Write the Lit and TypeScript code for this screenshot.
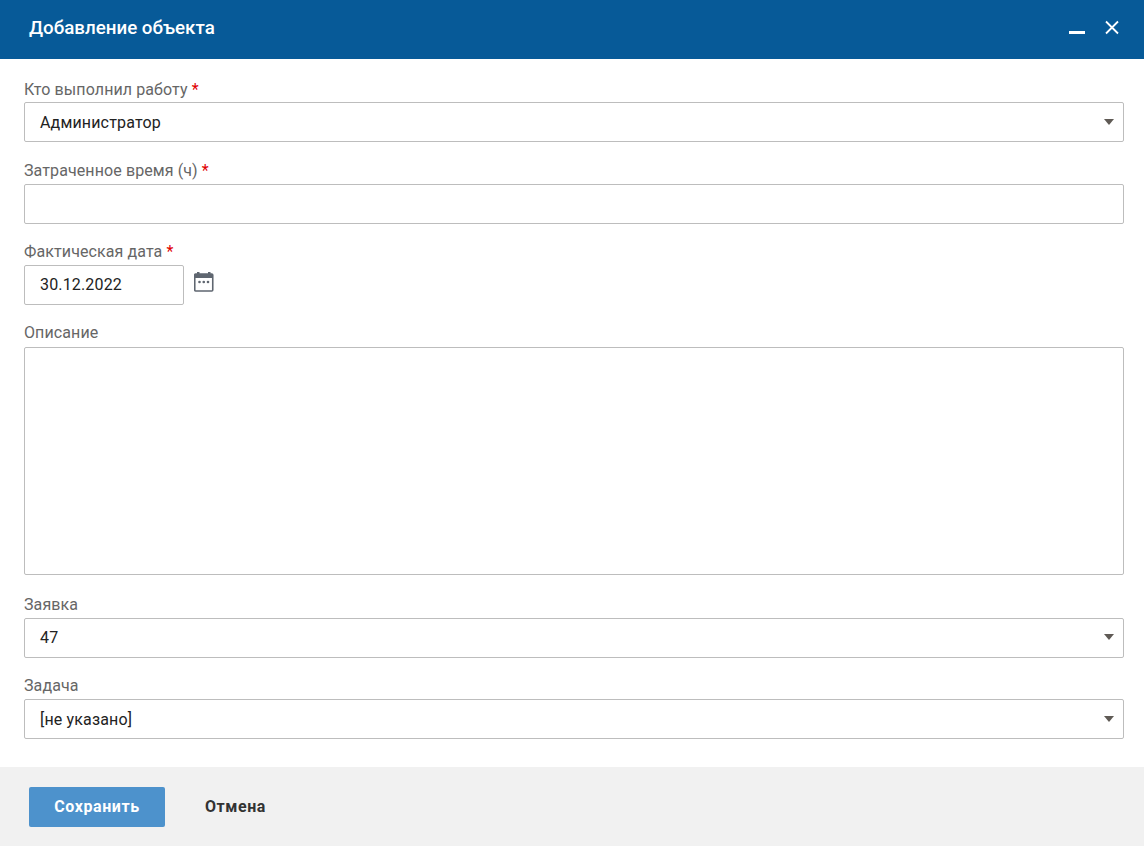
import { LitElement, html, css } from "lit";
import { customElement } from "lit/decorators.js";

@customElement("app-root")
export class AppRoot extends LitElement {
  static styles = css`
    :host { display: flex; flex-direction: column; width: 1144px; height: 846px; background: #fff; font-family: Roboto, sans-serif; font-size: 16px; color: #333; overflow: hidden; }
    .head { height: 59px; background: #075a98; display: flex; align-items: center; padding: 0 24px 3px 29px; flex: none; box-sizing: border-box; }
    .title { flex: 1; color: #fff; font-size: 18.75px; font-weight: 500; }
    .icons { display: flex; gap: 19px; align-items: center; }
    .body { flex: 1; padding: 21px 20px 0 24px; display: flex; flex-direction: column; }
    .field { display: flex; flex-direction: column; margin-bottom: 18px; }
    .field.first { margin-bottom: 19px; }
    .field.first label { height: 22px; }
    .field.wide { margin-bottom: 20px; }
    .field.wide label { height: 24px; }
    label { font-size: 16px; line-height: 19px; height: 23px; color: #666; letter-spacing: 0.1px; }
    .req { color: #e00000; }
    .box { box-sizing: border-box; height: 40px; border: 1px solid #bdbdbd; border-radius: 2px; background: #fff; display: flex; align-items: center; padding: 0 15px; font-size: 16px; color: #222; justify-content: space-between; letter-spacing: 0.16px; }
    .box.up { padding-bottom: 2px; }
    .caret { width: 0; height: 0; border-left: 5px solid transparent; border-right: 5px solid transparent; border-top: 6px solid #5f5a55; margin-right: -6px; }
    .date { display: flex; gap: 10px; align-items: flex-start; }
    .date .box { width: 160px; }
    .cal { margin-top: 7px; }
    .area { height: 228px; }
    .foot { height: 79px; flex: none; background: #f1f1f1; display: flex; align-items: center; padding: 0 29px; gap: 40px; }
    .save { width: 136px; height: 40px; box-sizing: border-box; background: #4d92cc; color: #fff; border-radius: 2px; display: flex; align-items: center; justify-content: center; font-weight: 700; font-size: 16px; letter-spacing: 0.6px; }
    .cancel { font-weight: 700; font-size: 16px; color: #333; letter-spacing: 0.55px; }
  `;
  render() {
    const caret = html`<span class="caret"></span>`;
    return html`
      <div class="head"><div class="title">Добавление объекта</div>
        <div class="icons">
          <svg width="16" height="16" viewBox="0 0 16 16"><rect y="11" width="16" height="3" fill="#fff"/></svg>
          <svg width="16" height="16" viewBox="0 0 16 16"><path d="M2 1.500l12 12M14 1.500L2 13.500" stroke="#fff" stroke-width="1.800"/></svg>
        </div>
      </div>
      <div class="body">
        <div class="field first"><label>Кто выполнил работу <span class="req">*</span></label><div class="box">Администратор${caret}</div></div>
        <div class="field"><label>Затраченное время (ч) <span class="req">*</span></label><div class="box"></div></div>
        <div class="field"><label>Фактическая дата <span class="req">*</span></label><div class="date"><div class="box up">30.12.2022</div>
          <svg class="cal" width="20" height="20" viewBox="0 0 20 20">
            <rect x="0.750" y="2" width="18" height="17" rx="1" fill="none" stroke="#5f6670" stroke-width="1.600"/>
            <rect x="0.750" y="2" width="18" height="4" fill="#5f6670"/>
            <rect x="3" y="0" width="2.500" height="3" fill="#5f6670"/>
            <rect x="14" y="0" width="2.500" height="3" fill="#5f6670"/>
            <circle cx="5.500" cy="10" r="1.300" fill="#5f6670"/><circle cx="9.750" cy="10" r="1.300" fill="#5f6670"/><circle cx="14" cy="10" r="1.300" fill="#5f6670"/>
          </svg></div></div>
        <div class="field wide"><label>Описание</label><div class="box area"></div></div>
        <div class="field"><label>Заявка</label><div class="box up">47${caret}</div></div>
        <div class="field"><label>Задача</label><div class="box">[не указано]${caret}</div></div>
      </div>
      <div class="foot"><div class="save">Сохранить</div><div class="cancel">Отмена</div></div>
    `;
  }
}
